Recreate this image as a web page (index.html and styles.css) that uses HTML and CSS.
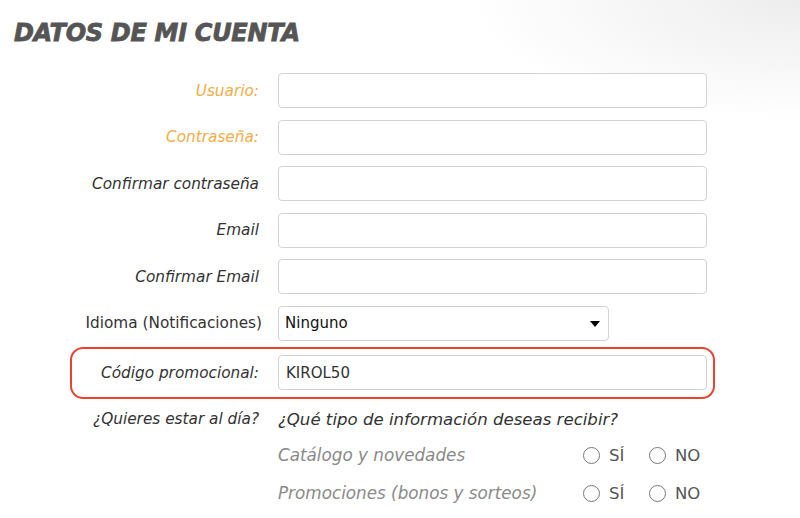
FILE: index.html
```html
<!DOCTYPE html>
<html>
  <head>
    <meta charset="utf-8" />
    <title>Datos de mi cuenta</title>
    <link rel="stylesheet" href="styles.css">
  </head>
  <body>
    <div class="page">
      <h2 class="title">DATOS DE MI CUENTA</h2>

      <form class="account-form">
        <div class="row">
          <label class="required" for="user">Usuario:</label>
          <input type="text" id="user" />
        </div>
        <div class="row">
          <label class="required" for="pass">Contraseña:</label>
          <input type="password" id="pass" />
        </div>
        <div class="row">
          <label for="pass2">Confirmar contraseña</label>
          <input type="password" id="pass2" />
        </div>
        <div class="row">
          <label for="email">Email</label>
          <input type="text" id="email" />
        </div>
        <div class="row">
          <label for="email2">Confirmar Email</label>
          <input type="text" id="email2" />
        </div>
        <div class="row">
          <label class="plain" for="lang">Idioma (Notificaciones)</label>
          <div class="select-wrap">
            <select id="lang">
              <option>Ninguno</option>
            </select>
          </div>
        </div>
        <div class="row promo">
          <label for="promo">Código promocional:</label>
          <input type="text" id="promo" value="KIROL50" />
        </div>

        <div class="news">
          <div class="news-head">
            <span class="news-question">¿Quieres estar al día?</span>
            <span class="news-sub">¿Qué tipo de información deseas recibir?</span>
          </div>
          <div class="news-list">
            <div class="news-item">
              <span class="news-name">Catálogo y novedades</span>
              <label class="radio"><input type="radio" name="cat" /> SÍ</label>
              <label class="radio"><input type="radio" name="cat" /> NO</label>
            </div>
            <div class="news-item">
              <span class="news-name">Promociones (bonos y sorteos)</span>
              <label class="radio"><input type="radio" name="promo" /> SÍ</label>
              <label class="radio"><input type="radio" name="promo" /> NO</label>
            </div>
          </div>
        </div>
      </form>
    </div>
  </body>
</html>
```

FILE: styles.css
```css
html,
body {
  margin: 0;
  height: 100%;
}

body {
  background: radial-gradient(ellipse 330px 120px at 100% 0, #ededed, rgba(255, 255, 255, 0)) #fff;
  font-family: 'DejaVu Sans', sans-serif;
  font-size: 15.3px;
  color: #333;
}

.page {
  padding: 19px 0 0 0;
}

.title {
  margin: 0 0 0 14px;
  font-size: 24px;
  font-weight: bold;
  font-style: italic;
  color: #555;
  line-height: 28px;
  letter-spacing: -0.3px;
  -webkit-text-stroke: 0.8px #555;
}

.account-form {
  display: flex;
  flex-direction: column;
  gap: 11.5px;
  margin-top: 26px;
}

.row {
  display: grid;
  grid-template-columns: 259px 429px;
  column-gap: 19px;
  align-items: center;
  height: 35px;
}

.row label {
  text-align: right;
  font-style: italic;
  color: #333;
}

.row label.required {
  color: #f3ad48;
}

.row label.plain {
  font-style: normal;
  margin-right: -3px;
}

.row input {
  box-sizing: border-box;
  height: 35px;
  border: 1px solid #d3d3d3;
  border-radius: 4px;
  padding: 0 7px;
  font-family: inherit;
  font-size: 15px;
  color: #333;
  background: #fff;
}

.select-wrap {
  position: relative;
  width: 331px;
}

.select-wrap select {
  box-sizing: border-box;
  width: 100%;
  height: 35px;
  border: 1px solid #d3d3d3;
  border-radius: 4px;
  padding: 0 6px;
  font-family: inherit;
  font-size: 15px;
  color: #111;
  background: #fff;
  appearance: none;
  -webkit-appearance: none;
}

.select-wrap:after {
  content: '';
  position: absolute;
  right: 9px;
  top: 15px;
  border-left: 5.5px solid transparent;
  border-right: 5.5px solid transparent;
  border-top: 6px solid #000;
}

.row.promo {
  box-sizing: content-box;
  margin-top: -5.5px;
  margin-left: 70px;
  width: 619px;
  padding: 6.5px 22px 6.5px 0;
  border: 2px solid #e8442e;
  border-radius: 13px;
  grid-template-columns: 187px 429px;
}

.news {
  display: flex;
  flex-direction: column;
  margin-top: -2px;
}

.news-head {
  display: grid;
  grid-template-columns: 259px auto;
  column-gap: 19px;
  height: 22px;
  align-items: center;
}

.news-question {
  text-align: right;
  font-style: italic;
}

.news-sub {
  font-style: italic;
  font-size: 16.6px;
}

.news-list {
  display: flex;
  flex-direction: column;
  margin-top: 6px;
}

.news-item {
  display: flex;
  align-items: center;
  height: 38px;
  padding-left: 278px;
}

.news-name {
  width: 305px;
  font-style: italic;
  font-size: 16.8px;
  color: #8a8a8a;
}

.radio {
  display: flex;
  align-items: center;
  gap: 9px;
  width: 66px;
  font-size: 16.5px;
  color: #555;
}

.radio input {
  appearance: none;
  -webkit-appearance: none;
  flex: none;
  width: 17px;
  height: 17px;
  margin: 0;
  border: 1px solid #777;
  border-radius: 50%;
  background: #fff;
}
```
